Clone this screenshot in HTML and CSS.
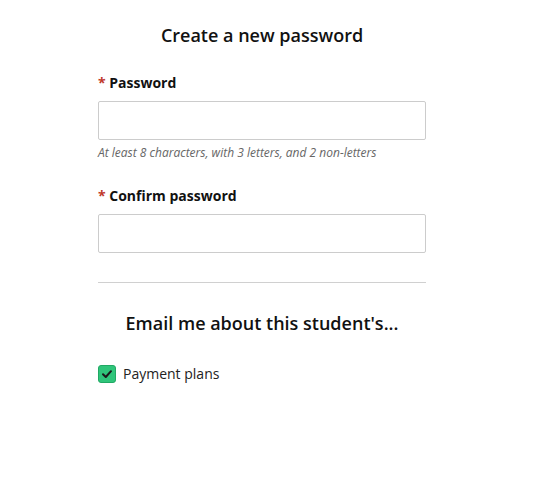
FILE: index.html
```html
<!DOCTYPE html>
<html lang="en">
<head>
    <meta charset="UTF-8">
    <meta name="viewport" content="width=device-width, initial-scale=1.0">
    <title>Create a new password</title>
    <link rel="stylesheet" href="styles.css">
</head>
<body>

    <div class="container">
        <h1>Create a new password</h1>

        <!-- password fields -->
        <div class="field">
            <label for="password"><span class="required">*</span> Password</label>
            <input type="password" id="password">
            <p class="hint">At least 8 characters, with 3 letters, and 2 non-letters</p>
        </div>

        <div class="field">
            <label for="confirmPassword"><span class="required">*</span> Confirm password</label>
            <input type="password" id="confirmPassword">
        </div>

        <hr class="divider">

        <h2>Email me about this student's...</h2>

        <label class="check-row">
            <span class="checkbox">
                <svg viewBox="0 0 12 12" width="12" height="12">
                    <path d="M2 6.2 L4.8 9 L10 3.2" fill="none" stroke="#1a1a1a" stroke-width="2" stroke-linecap="round" stroke-linejoin="round"/>
                </svg>
            </span>
            Payment plans
        </label>
    </div>

</body>
</html>
```

FILE: styles.css
```css
body {
    font-family: "Open Sans", Arial, sans-serif;
    background-color: #fff;
    margin: 0;
    padding: 0;
    color: #111;
}

.container {
    width: 328px;
    margin-left: 98px;
    padding-top: 22px;
}

h1 {
    font-size: 18px;
    font-weight: 600;
    text-align: center;
    margin: 0 0 25px;
    line-height: 26px;
}

.field {
    margin-bottom: 25px;
}

.field label {
    display: block;
    font-size: 14px;
    font-weight: 700;
    line-height: 20px;
    margin-bottom: 8px;
}

.required {
    color: #c0392b;
}

.field input {
    display: block;
    box-sizing: border-box;
    width: 100%;
    height: 39px;
    border: 1px solid #ccc;
    border-radius: 2px;
    padding: 0 8px;
    margin: 0;
}

.hint {
    font-size: 12px;
    font-style: italic;
    color: #666;
    margin: 4px 0 0;
    line-height: 17px;
}

.divider {
    border: none;
    border-top: 1px solid #d0d0d0;
    margin: 29px 0 0;
}

h2 {
    font-size: 18px;
    font-weight: 600;
    text-align: center;
    margin: 27px 0 28px;
    line-height: 26px;
}

.check-row {
    display: flex;
    align-items: center;
    gap: 7px;
    font-size: 14px;
    color: #222;
}

.checkbox {
    display: flex;
    align-items: center;
    justify-content: center;
    width: 18px;
    height: 18px;
    box-sizing: border-box;
    background-color: #2fc57a;
    border: 1px solid #21a864;
    border-radius: 3px;
}
```
